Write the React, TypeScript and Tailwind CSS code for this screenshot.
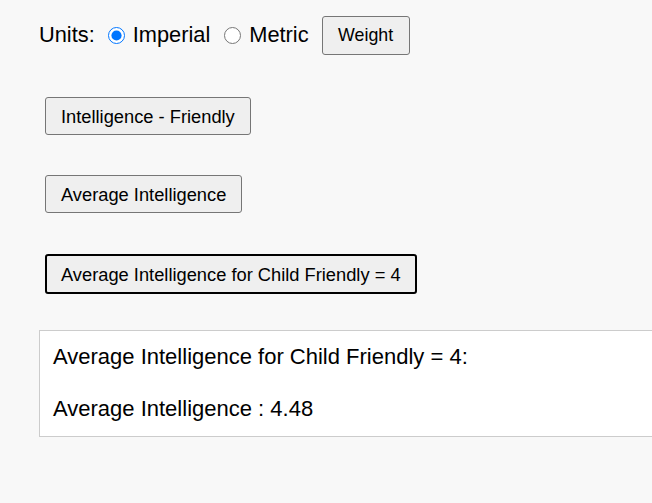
import React from "react";

export default function App() {
  const btn =
    "bg-[#efefef] border border-[#767676] rounded-[3px] text-black text-[18.3px] leading-[21px] px-[15px] h-[38px]";
  return (
    <div className="min-h-[503px] w-[652px] overflow-hidden bg-[#f8f8f8] font-['Liberation_Sans',Arial,sans-serif] text-black">
      <div className="pt-4 pl-[39px]">
        <div className="flex items-center h-[39px] text-[21.8px]">
          <span>Units:</span>
          <input
            type="radio"
            name="u"
            defaultChecked
            className="ml-[13px] w-[17px] h-[17px] m-0"
          />
          <span className="ml-[8px]">Imperial</span>
          <input
            type="radio"
            name="u"
            className="ml-[14px] w-[17px] h-[17px] m-0"
          />
          <span className="ml-[8px]">Metric</span>
          <button className="ml-[13px] bg-[#efefef] border border-[#767676] rounded-[3px] text-[17.8px] w-[88px] h-[39px]">
            Weight
          </button>
        </div>
        <div className="pl-[6px] flex flex-col items-start">
          <button className={btn + " mt-[42px]"}>Intelligence - Friendly</button>
          <button className={btn + " mt-[40px]"}>Average Intelligence</button>
          <button className="mt-[41px] bg-[#efefef] border-2 border-black rounded-[3px] text-black text-[18.3px] leading-[21px] px-[14px] h-[40px]">
            Average Intelligence for Child Friendly = 4
          </button>
        </div>
        <div className="mt-[36px] w-[700px] h-[107px] bg-white border border-[#cccccc] pl-[13px] pt-[13px] text-[22px] leading-[25px]">
          <p>Average Intelligence for Child Friendly = 4:</p>
          <p className="mt-[27px]">Average Intelligence : 4.48</p>
        </div>
      </div>
    </div>
  );
}
